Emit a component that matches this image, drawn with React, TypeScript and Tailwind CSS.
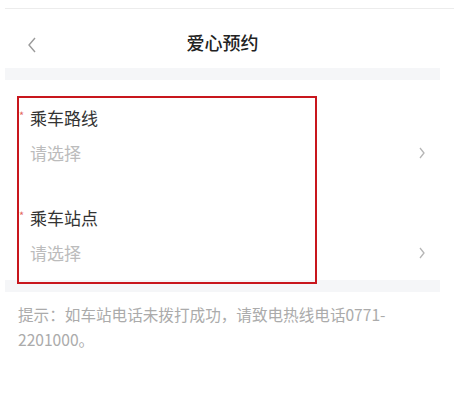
function Chevron({ dir }: { dir: 'left' | 'right' }) {
  return dir === 'left' ? (
    <svg width="10" height="16" viewBox="0 0 10 16" fill="none">
      <polyline points="8,1 2,8 8,15" stroke="#9a9a9a" strokeWidth="1.4" />
    </svg>
  ) : (
    <svg width="8" height="12" viewBox="0 0 8 12" fill="none">
      <polyline points="2,1 6,6 2,11" stroke="#b5b5b5" strokeWidth="1.3" />
    </svg>
  )
}

function Field({ label, className = '' }: { label: string; className?: string }) {
  return (
    <div className={`relative flex flex-col pl-[25px] pr-[14px] ${className}`}>
      <span className="absolute left-[14px] top-[3px] text-[11px] leading-none text-[#e4675f]">
        *
      </span>
      <div className="text-[17px] leading-[22px] text-[#333]">{label}</div>
      <div className="mt-[13px] flex items-center justify-between">
        <span className="text-[17px] leading-[22px] text-[#bcbcbc]">请选择</span>
        <Chevron dir="right" />
      </div>
    </div>
  )
}

export default function App() {
  return (
    <div
      className="relative h-[400px] w-[454px] overflow-hidden bg-white"
      style={{ fontFamily: '"Noto Sans CJK SC", "Noto Sans", sans-serif' }}
    >
      <div className="ml-[5px] mt-[8px] border-t border-[#ececec]" />
      <div className="ml-[5px] w-[435px]">
        <header className="relative flex h-[59px] items-center justify-center pt-[8px]">
          <div className="absolute left-[22px] top-[28px]">
            <Chevron dir="left" />
          </div>
          <h1 className="text-[18px] font-medium text-[#222]">爱心预约</h1>
        </header>
        <div className="h-[12px] bg-[#f5f6f8]" />
        <div className="pb-[16px] pt-[27px]">
          <Field label="乘车路线" />
          <Field label="乘车站点" className="mt-[43px]" />
        </div>
        <div className="h-[12px] bg-[#f5f6f8]" />
        <p className="mt-[10px] w-[415px] pl-[13px] text-[15.6px] leading-[25px] text-[#ababab]">
          提示：如车站电话未拨打成功，请致电热线电话0771-2201000。
        </p>
      </div>
      <div className="pointer-events-none absolute left-[17px] top-[96px] h-[188px] w-[300px] border-2 border-[#c8161d]" />
    </div>
  )
}
